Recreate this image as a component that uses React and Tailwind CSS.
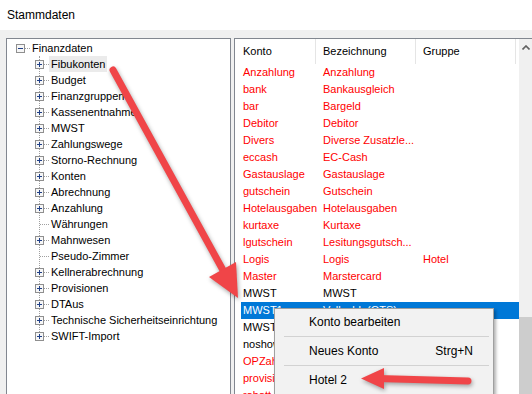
import React from 'react';

const treeItems = [
  { label: 'Fibukonten', exp: true, hl: true },
  { label: 'Budget', exp: true },
  { label: 'Finanzgruppen', exp: true },
  { label: 'Kassenentnahme', exp: true },
  { label: 'MWST', exp: true },
  { label: 'Zahlungswege', exp: true },
  { label: 'Storno-Rechnung', exp: true },
  { label: 'Konten', exp: true },
  { label: 'Abrechnung', exp: true },
  { label: 'Anzahlung', exp: true },
  { label: 'Währungen', exp: false },
  { label: 'Mahnwesen', exp: true },
  { label: 'Pseudo-Zimmer', exp: false },
  { label: 'Kellnerabrechnung', exp: true },
  { label: 'Provisionen', exp: true },
  { label: 'DTAus', exp: true },
  { label: 'Technische Sicherheitseinrichtung', exp: true },
  { label: 'SWIFT-Import', exp: true },
];

const rows = [
  { k: 'Anzahlung', b: 'Anzahlung', red: true },
  { k: 'bank', b: 'Bankausgleich', red: true },
  { k: 'bar', b: 'Bargeld', red: true },
  { k: 'Debitor', b: 'Debitor', red: true },
  { k: 'Divers', b: 'Diverse Zusatzle...', red: true },
  { k: 'eccash', b: 'EC-Cash', red: true },
  { k: 'Gastauslage', b: 'Gastauslage', red: true },
  { k: 'gutschein', b: 'Gutschein', red: true },
  { k: 'Hotelausgaben', b: 'Hotelausgaben', red: true },
  { k: 'kurtaxe', b: 'Kurtaxe', red: true },
  { k: 'lgutschein', b: 'Lesitungsgutsch...', red: true },
  { k: 'Logis', b: 'Logis', g: 'Hotel', red: true },
  { k: 'Master', b: 'Marstercard', red: true },
  { k: 'MWST', b: 'MWST' },
  { k: 'MWST1', b: 'Vollzahl. (OTS)...', sel: true },
  { k: 'MWST1', b: 'MWST 7%' },
  { k: 'noshow', b: 'No Show' },
  { k: 'OPZahlung', b: 'OP Zahlung', red: true },
  { k: 'provision', b: 'Provision', red: true },
  { k: 'rabatt', b: 'Rabatt', red: true },
];

function ExpBox({ plus }) {
  return (
    <svg width="9" height="9" className="shrink-0 block">
      <rect x="0.5" y="0.5" width="8" height="8" fill="#f6f6f6" stroke="#8f8f8f" />
      <rect x="2" y="4" width="5" height="1" fill="#1f3f87" />
      {plus && <rect x="4" y="2" width="1" height="5" fill="#1f3f87" />}
    </svg>
  );
}

function TreeRow({ label, exp, hl }) {
  return (
    <div className="flex items-center h-4">
      {exp ? (
        <>
          <div className="w-[28px] shrink-0" />
          <ExpBox plus />
          <div className="w-[5px] border-t border-dotted border-[#a0a0a0]" />
        </>
      ) : (
        <>
          <div className="w-[33px] shrink-0" />
          <div className="w-[9px] border-t border-dotted border-[#a0a0a0]" />
        </>
      )}
      <span className={`px-[2px] h-4 leading-4 whitespace-nowrap ${hl ? 'bg-[#ebebeb]' : ''}`}>{label}</span>
    </div>
  );
}

export default function App() {
  return (
    <div className="w-[532px] h-[394px] overflow-hidden relative bg-[#f0f0f0] flex flex-col text-black font-['Liberation_Sans',Arial,sans-serif] text-[11px]">
      <div className="h-[30px] shrink-0 bg-white flex items-center pl-[7px] text-[12px]">Stammdaten</div>

      <div className="flex pt-[8px] pl-[6px] gap-[3px]">
        {/* tree */}
        <div className="w-[225px] h-[400px] shrink-0 bg-white border border-[#828790] pt-[1px]">
          <div className="flex items-center h-4">
            <div className="w-[9px] shrink-0" />
            <ExpBox />
            <div className="w-[5px] border-t border-dotted border-[#a0a0a0]" />
            <span className="px-[2px] leading-4">Finanzdaten</span>
          </div>
          <div className="relative">
            <div className="absolute left-[32px] top-0 bottom-[8px] border-l border-dotted border-[#a0a0a0]" />
            <div className="relative">
              {treeItems.map(t => (
                <TreeRow key={t.label} {...t} />
              ))}
            </div>
          </div>
        </div>

        {/* list */}
        <div className="w-[300px] h-[400px] shrink-0 bg-white border border-[#828790] flex">
          <div className="w-[284px] shrink-0">
            <div className="flex h-[25px] items-center">
              <div className="w-[81px] h-full pl-[8px] flex items-center border-r border-[#e5e5e5]">Konto</div>
              <div className="w-[100px] h-full pl-[7px] flex items-center border-r border-[#e5e5e5]">Bezeichnung</div>
              <div className="w-[100px] h-full pl-[7px] flex items-center border-r border-[#e5e5e5]">Gruppe</div>
            </div>
            {rows.map((r, i) => (
              <div
                key={i}
                className={`ml-[6px] flex h-[17px] items-center whitespace-nowrap ${
                  r.sel ? 'bg-[#0078d7] text-white' : r.red ? 'text-[#ff0000]' : 'text-black'
                }`}
              >
                <div className="w-[75px] pl-[2px]">{r.k}</div>
                <div className="w-[100px] pl-[7px]">{r.b}</div>
                <div className="pl-[7px]">{r.g}</div>
              </div>
            ))}
          </div>
          <div className="w-[15px] shrink-0 flex flex-col bg-[#f0f0f0]">
            <div className="h-[17px] flex items-center justify-center pr-[2px]">
              <svg width="8" height="5">
                <path d="M0.5 4.5 L4 1 L7.5 4.5" fill="none" stroke="#606060" strokeWidth="1.6" />
              </svg>
            </div>
            <div className="h-[261px]" />
            <div className="flex-1 bg-[#cdcdcd]" />
          </div>
        </div>
      </div>

      {/* context menu */}
      <div className="absolute left-[274px] top-[308px] w-[220px] h-[100px] bg-[#f2f2f2] border border-[#a0a0a0] shadow-[2px_2px_3px_rgba(0,0,0,0.3)] pt-[2px] text-[12px]">
        <div className="h-[22px] flex items-center pl-[34px]">Konto bearbeiten</div>
        <div className="h-[7px] flex items-center">
          <div className="ml-[9px] mr-[4px] flex-1 border-t border-[#d2d2d2]" />
        </div>
        <div className="h-[22px] flex items-center justify-between pl-[34px] pr-[20px]">
          <span>Neues Konto</span>
          <span>Strg+N</span>
        </div>
        <div className="h-[7px] flex items-center">
          <div className="ml-[9px] mr-[4px] flex-1 border-t border-[#d2d2d2]" />
        </div>
        <div className="h-[22px] flex items-center pl-[34px]">Hotel 2</div>
      </div>

      {/* annotation arrows */}
      <svg className="absolute inset-0 pointer-events-none" width="532" height="394" style={{ filter: 'drop-shadow(1px 2px 2px rgba(0,0,0,0.35))' }}>
        <line x1="113" y1="70" x2="224" y2="272" stroke="#f04548" strokeWidth="7" strokeLinecap="round" />
        <polygon points="238,298 236,262 209,277" fill="#f04548" />
        <line x1="468" y1="381" x2="378" y2="378.5" stroke="#f04548" strokeWidth="7" strokeLinecap="round" />
        <polygon points="361,378.5 384,368 384,389" fill="#f04548" />
      </svg>
    </div>
  );
}
